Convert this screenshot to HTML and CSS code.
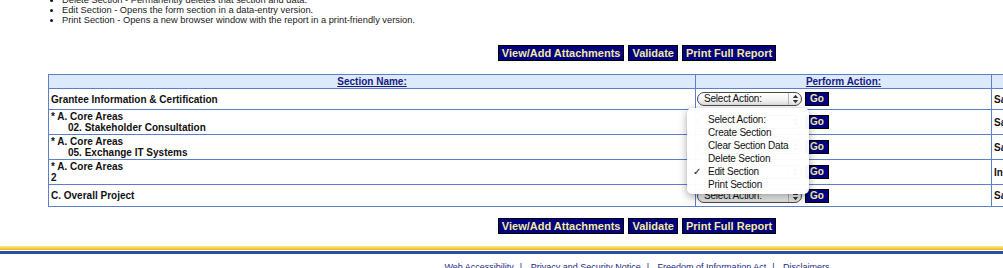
FILE: index.html
```html
<!DOCTYPE html>
<html lang="en">
<head>
<meta charset="utf-8">
<title>Report Sections</title>
<link rel="stylesheet" href="styles.css">
</head>
<body>
<div class="page">
  <ul class="help">
    <li>Delete Section - Permanently deletes that section and data.</li>
    <li>Edit Section - Opens the form section in a data-entry version.</li>
    <li>Print Section - Opens a new browser window with the report in a print-friendly version.</li>
  </ul>

  <div class="btnbar">
    <button class="btn">View/Add Attachments</button>
    <button class="btn">Validate</button>
    <button class="btn">Print Full Report</button>
  </div>

  <table class="sections">
    <colgroup>
      <col class="c-name">
      <col class="c-act">
      <col class="c-status">
    </colgroup>
    <thead>
      <tr>
        <th><a href="#">Section Name:</a></th>
        <th><a href="#">Perform Action:</a></th>
        <th></th>
      </tr>
    </thead>
    <tbody>
      <tr>
        <td class="name">Grantee Information &amp; Certification</td>
        <td class="act-cell">
          <div class="act">
            <span class="sel">
              <span class="sel-label">Select Action:</span>
              <span class="sel-arrows"><svg width="7" height="10" viewBox="0 0 7 10"><path d="M3.5 0.8 L6.2 4 H0.8 Z M3.5 9.2 L6.2 6 H0.8 Z" fill="#333"/></svg></span>
              <ul class="menu">
                <li><span class="mark"></span>Select Action:</li>
                <li><span class="mark"></span>Create Section</li>
                <li><span class="mark"></span>Clear Section Data</li>
                <li><span class="mark"></span>Delete Section</li>
                <li><span class="mark">✓</span>Edit Section</li>
                <li><span class="mark"></span>Print Section</li>
              </ul>
            </span>
            <button class="go">Go</button>
          </div>
        </td>
        <td class="status">Saved</td>
      </tr>
      <tr>
        <td class="name">* A. Core Areas<span class="sub">02. Stakeholder Consultation</span></td>
        <td class="act-cell">
          <div class="act">
            <span class="sel">
              <span class="sel-label">Select Action:</span>
              <span class="sel-arrows"><svg width="7" height="10" viewBox="0 0 7 10"><path d="M3.5 0.8 L6.2 4 H0.8 Z M3.5 9.2 L6.2 6 H0.8 Z" fill="#333"/></svg></span>
            </span>
            <button class="go">Go</button>
          </div>
        </td>
        <td class="status">Saved</td>
      </tr>
      <tr>
        <td class="name">* A. Core Areas<span class="sub">05. Exchange IT Systems</span></td>
        <td class="act-cell">
          <div class="act">
            <span class="sel">
              <span class="sel-label">Select Action:</span>
              <span class="sel-arrows"><svg width="7" height="10" viewBox="0 0 7 10"><path d="M3.5 0.8 L6.2 4 H0.8 Z M3.5 9.2 L6.2 6 H0.8 Z" fill="#333"/></svg></span>
            </span>
            <button class="go">Go</button>
          </div>
        </td>
        <td class="status">Saved</td>
      </tr>
      <tr>
        <td class="name">* A. Core Areas<br>2</td>
        <td class="act-cell">
          <div class="act">
            <span class="sel">
              <span class="sel-label">Select Action:</span>
              <span class="sel-arrows"><svg width="7" height="10" viewBox="0 0 7 10"><path d="M3.5 0.8 L6.2 4 H0.8 Z M3.5 9.2 L6.2 6 H0.8 Z" fill="#333"/></svg></span>
            </span>
            <button class="go">Go</button>
          </div>
        </td>
        <td class="status">Initial</td>
      </tr>
      <tr class="last">
        <td class="name">C. Overall Project</td>
        <td class="act-cell">
          <div class="act">
            <span class="sel">
              <span class="sel-label">Select Action:</span>
              <span class="sel-arrows"><svg width="7" height="10" viewBox="0 0 7 10"><path d="M3.5 0.8 L6.2 4 H0.8 Z M3.5 9.2 L6.2 6 H0.8 Z" fill="#333"/></svg></span>
            </span>
            <button class="go">Go</button>
          </div>
        </td>
        <td class="status">Saved</td>
      </tr>
    </tbody>
  </table>

  <div class="btnbar bottom">
    <button class="btn">View/Add Attachments</button>
    <button class="btn">Validate</button>
    <button class="btn">Print Full Report</button>
  </div>

  <div class="stripe"><div class="gold"></div><div class="blue"></div></div>

  <div class="footer">
    <a href="#">Web Accessibility</a><span class="sep">|</span>
    <a href="#">Privacy and Security Notice</a><span class="sep">|</span>
    <a href="#">Freedom of Information Act</a><span class="sep">|</span>
    <a href="#">Disclaimers</a>
  </div>
</div>
</body>
</html>
```

FILE: styles.css
```css
html, body {
  margin: 0;
  padding: 0;
  overflow: hidden;
  background: #fff;
}

body {
  font-family: "Liberation Sans", Arial, sans-serif;
  color: #111;
}

.page {
  width: 1274px;
}

/* help list */
.help {
  margin: -5px 0 0 0;
  padding: 0 0 0 62px;
  font-size: 9.3px;
  line-height: 10px;
  color: #1a1a1a;
  list-style: disc outside;
}

/* button bars */
.btnbar {
  display: flex;
  justify-content: center;
  gap: 4px;
  margin-top: 20px;
}

.btnbar.bottom {
  margin-top: 11px;
}

.btn,
.go {
  font-family: "Liberation Sans", Arial, sans-serif;
  font-weight: bold;
  background: #000080;
  color: #f4eb9e;
  border: 1px solid #000;
  margin: 0;
  border-radius: 0;
  cursor: pointer;
}

.btn {
  font-size: 11px;
  height: 16px;
  line-height: 14px;
  padding: 0 3px;
}

/* table */
.sections {
  margin: 13px 0 0 48px;
  width: 1178px;
  table-layout: fixed;
  border-collapse: collapse;
  font-size: 10px;
  line-height: 11px;
}

.c-name { width: 647px; }
.c-act { width: 296px; }
.c-status { width: 235px; }

.sections th,
.sections td {
  border: 1px solid #5b7fc8;
  padding: 1px 2px;
  vertical-align: middle;
}

.sections th {
  background: #dde9fc;
  text-align: center;
  font-weight: bold;
}

.sections th a {
  color: #161a7c;
  text-decoration: underline;
}

.sections td {
  font-weight: bold;
  color: #111;
  white-space: nowrap;
  overflow: hidden;
}

.sections td.act-cell {
  overflow: visible;
  padding-left: 1px;
}

.sub {
  display: block;
  padding-left: 17px;
}

.act {
  display: flex;
  align-items: center;
  gap: 3px;
  height: 18px;
}

.last .act {
  height: 19px;
}

/* faux select */
.sel {
  position: relative;
  display: flex;
  align-items: center;
  box-sizing: border-box;
  width: 105px;
  height: 14px;
  border: 1px solid #4a4a4a;
  border-radius: 7px;
  background: linear-gradient(#ffffff, #f1f1f1 60%, #dedede);
  font-family: "Liberation Sans", Arial, sans-serif;
  font-weight: normal;
  font-size: 10px;
  letter-spacing: -0.2px;
  color: #111;
}

.sel-label {
  flex: 1;
  padding-left: 6px;
  line-height: 12px;
}

.sel-arrows {
  display: flex;
  align-items: center;
  justify-content: center;
  width: 12px;
  height: 12px;
  border-left: 1px solid #b8b8b8;
}

.go {
  font-size: 10px;
  width: 24px;
  height: 14px;
  line-height: 12px;
  padding: 0;
  text-align: center;
}

/* open dropdown menu */
.menu {
  position: absolute;
  left: -11px;
  top: 15px;
  z-index: 5;
  width: 122px;
  box-sizing: border-box;
  margin: 0;
  padding: 5px 0 3px;
  list-style: none;
  background: rgba(255, 255, 255, 0.97);
  border-radius: 5px;
  box-shadow: 0 3px 9px rgba(0, 0, 0, 0.35), 0 0 1px rgba(0, 0, 0, 0.3);
  font-size: 10px;
  letter-spacing: -0.2px;
  line-height: 13px;
  color: #111;
}

.menu li {
  display: flex;
  white-space: nowrap;
}

.mark {
  width: 21px;
  box-sizing: border-box;
  padding-left: 6px;
  font-family: "DejaVu Sans", sans-serif;
  font-size: 10px;
}

/* footer */
.stripe {
  margin-top: 12px;
}

.stripe .gold {
  height: 4px;
  background: linear-gradient(#fde48f, #f3bb16);
}

.stripe .blue {
  height: 3px;
  margin-top: 1px;
  background: #2a4d9e;
}

.footer {
  margin-top: 7px;
  text-align: center;
  font-size: 9px;
  line-height: 12px;
  color: #1c2a7a;
}

.footer a {
  color: #1c2a7a;
  text-decoration: none;
}

.footer .sep {
  margin: 0 6px;
}
```
